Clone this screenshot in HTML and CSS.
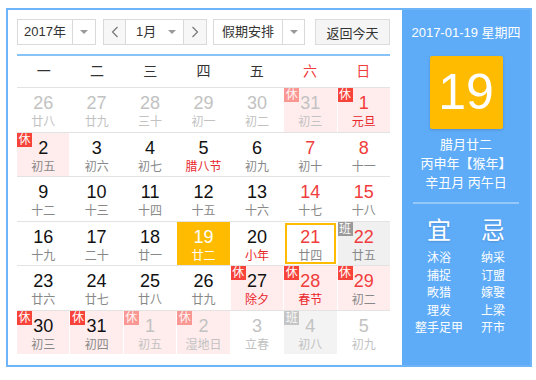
FILE: index.html
```html
<!DOCTYPE html>
<html lang="zh-CN">
<head>
  <meta charset="UTF-8">
  <title>万年历</title>
  <link rel="stylesheet" href="styles.css">
</head>
<body>

  <div class="calendar">
    <div class="main">
      <div class="toolbar">
        <div class="select year-select">
          <span class="select-text">2017年</span>
          <span class="select-arrow"><i class="caret"></i></span>
        </div>
        <div class="select month-select">
          <span class="nav-btn prev">
            <svg width="8" height="12" viewBox="0 0 8 12"><path d="M6.5 1 L1.5 6 L6.5 11" fill="none" stroke="#777" stroke-width="1.2"/></svg>
          </span>
          <span class="month-mid">1月<i class="caret"></i></span>
          <span class="nav-btn next">
            <svg width="8" height="12" viewBox="0 0 8 12"><path d="M1.5 1 L6.5 6 L1.5 11" fill="none" stroke="#777" stroke-width="1.2"/></svg>
          </span>
        </div>
        <div class="select holiday-select">
          <span class="select-text">假期安排</span>
          <span class="select-arrow"><i class="caret"></i></span>
        </div>
        <button class="today-btn">返回今天</button>
      </div>
      <div class="divider"></div>

      <div class="week-head">
        <span>一</span><span>二</span><span>三</span><span>四</span><span>五</span>
        <span class="red">六</span><span class="red">日</span>
      </div>

      <div class="days" id="days"></div>
    </div>

    <div class="side">
      <div class="side-date">2017-01-19 星期四</div>
      <div class="big-day">19</div>
      <div class="lunar-info">
        <div>腊月廿二</div>
        <div>丙申年【猴年】</div>
        <div>辛丑月 丙午日</div>
      </div>
      <div class="side-line"></div>
      <div class="yiji">
        <div class="yiji-col">
          <div class="yiji-title">宜</div>
          <div>沐浴</div>
          <div>捕捉</div>
          <div>畋猎</div>
          <div>理发</div>
          <div>整手足甲</div>
        </div>
        <div class="yiji-col">
          <div class="yiji-title">忌</div>
          <div>纳采</div>
          <div>订盟</div>
          <div>嫁娶</div>
          <div>上梁</div>
          <div>开市</div>
        </div>
      </div>
    </div>
  </div>

  <script>
    // d: day, l: lunar, o: other month, w: red number, h: red lunar,
    // b: badge (休/班), t: today, s: selected
    const weeks = [
      [
        { d: 26, l: "廿八", o: 1 }, { d: 27, l: "廿九", o: 1 }, { d: 28, l: "三十", o: 1 },
        { d: 29, l: "初一", o: 1 }, { d: 30, l: "初二", o: 1 },
        { d: 31, l: "初三", o: 1, b: "休" },
        { d: 1, l: "元旦", w: 1, h: 1, b: "休" }
      ],
      [
        { d: 2, l: "初五", b: "休" }, { d: 3, l: "初六" }, { d: 4, l: "初七" },
        { d: 5, l: "腊八节", h: 1 }, { d: 6, l: "初九" },
        { d: 7, l: "初十", w: 1 }, { d: 8, l: "十一", w: 1 }
      ],
      [
        { d: 9, l: "十二" }, { d: 10, l: "十三" }, { d: 11, l: "十四" },
        { d: 12, l: "十五" }, { d: 13, l: "十六" },
        { d: 14, l: "十七", w: 1 }, { d: 15, l: "十八", w: 1 }
      ],
      [
        { d: 16, l: "十九" }, { d: 17, l: "二十" }, { d: 18, l: "廿一" },
        { d: 19, l: "廿二", t: 1 }, { d: 20, l: "小年", h: 1 },
        { d: 21, l: "廿四", w: 1, s: 1 }, { d: 22, l: "廿五", w: 1, b: "班" }
      ],
      [
        { d: 23, l: "廿六" }, { d: 24, l: "廿七" }, { d: 25, l: "廿八" },
        { d: 26, l: "廿九" }, { d: 27, l: "除夕", h: 1, b: "休" },
        { d: 28, l: "春节", w: 1, h: 1, b: "休" }, { d: 29, l: "初二", w: 1, b: "休" }
      ],
      [
        { d: 30, l: "初三", b: "休" }, { d: 31, l: "初四", b: "休" },
        { d: 1, l: "初五", o: 1, b: "休" }, { d: 2, l: "湿地日", o: 1, b: "休" },
        { d: 3, l: "立春", o: 1 }, { d: 4, l: "初八", o: 1, b: "班" },
        { d: 5, l: "初九", o: 1 }
      ]
    ];

    const daysEl = document.getElementById("days");

    weeks.forEach(week => {
      const row = document.createElement("div");
      row.className = "week";
      week.forEach(c => {
        const cell = document.createElement("div");
        let cls = "cell";
        if (c.o) cls += " other";
        if (c.w) cls += " weekend";
        if (c.h) cls += " holiday";
        if (c.t) cls += " today";
        if (c.s) cls += " selected";
        if (c.b === "休") cls += " rest";
        if (c.b === "班") cls += " work";
        cell.className = cls;
        let html = "";
        if (c.b) html += `<span class="badge">${c.b}</span>`;
        html += `<div class="num">${c.d}</div><div class="lunar">${c.l}</div>`;
        cell.innerHTML = html;
        row.appendChild(cell);
      });
      daysEl.appendChild(row);
    });
  </script>

</body>
</html>
```

FILE: styles.css
```css
body {
  margin: 0;
  font-family: "Liberation Sans", "Noto Sans CJK SC", sans-serif;
  background: #fff;
  color: #333;
}
.calendar {
  margin: 8px 0 0 6px;
  width: 522px;
  height: 355px;
  border: 2px solid #6db4f8;
  display: flex;
}
.main {
  width: 373px;
  padding: 9px 12px 0 9px;
}
.toolbar {
  display: flex;
  height: 26px;
  font-size: 13px;
}
.select {
  display: flex;
  height: 24px;
  border: 1px solid #d9d9d9;
  background: #fff;
  line-height: 24px;
}
.select-text {
  border-right: 1px solid #d9d9d9;
  text-align: center;
}
.select-arrow {
  display: flex;
  align-items: center;
  justify-content: center;
  width: 22px;
}
.caret {
  display: inline-block;
  width: 0;
  height: 0;
  border-left: 4px solid transparent;
  border-right: 4px solid transparent;
  border-top: 4px solid #999;
}
.year-select .select-text {
  width: 54px;
}
.month-select {
  margin-left: 7px;
}
.nav-btn {
  display: flex;
  align-items: center;
  justify-content: center;
  width: 21px;
  background: #f7f7f7;
}
.nav-btn.prev {
  border-right: 1px solid #d9d9d9;
}
.nav-btn.next {
  width: 22px;
  border-left: 1px solid #d9d9d9;
}
.month-mid {
  display: flex;
  align-items: center;
  width: 57px;
  padding-left: 10px;
  box-sizing: border-box;
  gap: 12px;
}
.holiday-select {
  margin-left: 6px;
}
.holiday-select .select-text {
  width: 68px;
}
.holiday-select .select-arrow {
  width: 21px;
}
.today-btn {
  margin-left: 10px;
  width: 79px;
  height: 26px;
  padding: 0;
  border: 1px solid #dcdcdc;
  background: #f5f5f5;
  font-family: inherit;
  font-size: 13px;
  color: #333;
}
.divider {
  margin-top: 9px;
  height: 2px;
  background: #88c3f8;
}
.week-head {
  display: grid;
  grid-template-columns: repeat(7, 1fr);
  height: 31px;
  line-height: 31px;
  text-align: center;
  font-size: 14px;
  color: #333;
  border-bottom: 1px solid #e3e3e3;
}
.red {
  color: #f03c3c;
}
.week {
  display: grid;
  grid-template-columns: repeat(7, 1fr);
  gap: 1px;
  height: 43.5px;
  border-bottom: 1px solid #e3e3e3;
}
.week:last-child {
  border-bottom: none;
}
.cell {
  position: relative;
  text-align: center;
  padding-top: 5px;
}
.num {
  font-size: 18px;
  line-height: 20px;
  color: #111;
}
.lunar {
  margin-top: 2px;
  font-size: 12px;
  line-height: 14px;
  color: #888;
}
.cell.weekend .num {
  color: #f03c3c;
}
.cell.holiday .lunar {
  color: #e8262b;
}
.cell.other .num,
.cell.other .lunar {
  color: #c2c2c2;
}
.cell.rest {
  background: #ffeded;
}
.cell.work {
  background: #f0f0f0;
}
.cell.other.work {
  background: #f3f3f3;
}
.badge {
  position: absolute;
  left: 0;
  top: 0;
  width: 15px;
  height: 14px;
  line-height: 14px;
  font-size: 12px;
  color: #fff;
  background: #f7433a;
}
.cell.work .badge {
  background: #999;
}
.cell.other .badge {
  opacity: 0.5;
}
.cell.today {
  background: #ffbb00;
}
.cell.today .num,
.cell.today .lunar {
  color: #fff;
}
.cell.selected {
  outline: 2px solid #ffbb00;
  outline-offset: -3px;
}
.side {
  flex: 1;
  background: #5eabf8;
  color: #fff;
  text-align: center;
}
.side-date {
  padding-top: 14px;
  font-size: 13px;
  line-height: 18px;
}
.big-day {
  margin: 14px auto 0;
  width: 73px;
  height: 73px;
  line-height: 73px;
  background: #ffbb00;
  border-radius: 2px;
  box-shadow: 0 1px 3px rgba(0, 0, 0, 0.15);
  font-size: 50px;
}
.lunar-info {
  margin-top: 6px;
  font-size: 13px;
  line-height: 19px;
}
.side-line {
  margin: 10px auto 0;
  width: 106px;
  height: 2px;
  background: rgba(255, 255, 255, 0.35);
}
.yiji {
  display: flex;
  justify-content: center;
  margin-top: 12px;
}
.yiji-col {
  width: 54px;
  font-size: 12px;
  line-height: 17.5px;
}
.yiji-title {
  font-size: 24px;
  line-height: 30px;
  margin-bottom: 4px;
  text-shadow: 0 1px 2px rgba(0, 0, 0, 0.15);
}
```
